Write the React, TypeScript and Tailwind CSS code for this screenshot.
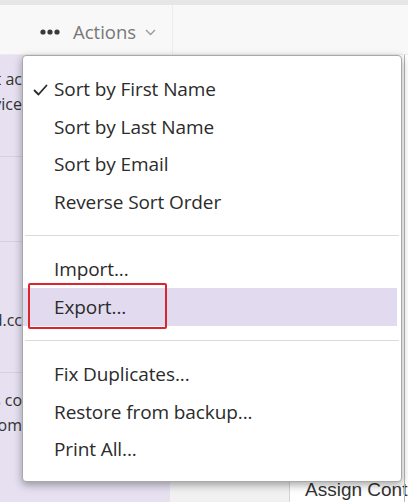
import React from "react";

const font = { fontFamily: '"Open Sans", "Noto Sans", Arial, sans-serif' };

function Peek({ text, className }: { text: string; className?: string }) {
  return (
    <div className={"flex justify-end overflow-hidden whitespace-nowrap w-[22px] " + (className ?? "")}>
      <span className="shrink-0">{text}</span>
    </div>
  );
}

function Item({ label, checked }: { label: string; checked?: boolean }) {
  return (
    <div className="h-[37.5px] flex items-center pl-[10px]">
      <div className="w-[21px] flex items-center">
        {checked && (
          <svg width="15" height="12" viewBox="0 0 15 12" fill="none">
            <path d="M1.5 6.5 L5.5 10.5 L13.5 1.5" stroke="#2a2a2a" strokeWidth="1.8" strokeLinecap="round" strokeLinejoin="round" />
          </svg>
        )}
      </div>
      <span className="text-[19px] text-[#2b2b2b] whitespace-nowrap tracking-[-0.1px]">{label}</span>
    </div>
  );
}

function Sep() {
  return (
    <div className="h-[30px] flex items-center px-[2px]">
      <div className="h-px w-full bg-[#dadada]" />
    </div>
  );
}

export default function App() {
  return (
    <div className="relative w-[408px] h-[502px] overflow-hidden bg-white flex flex-col" style={font}>
      <div className="h-[5px] bg-[#e6e6e6] shrink-0" />
      <div className="h-[50px] shrink-0 bg-[#f8f8f8] flex items-center border-b border-[#ececec]">
        <div className="w-[173px] h-full flex items-center pl-[40px] pt-[4px] border-r border-[#ededed]">
          <svg width="20" height="6" viewBox="0 0 20 6">
            <circle cx="3" cy="3" r="2.6" fill="#3a3a3a" />
            <circle cx="10" cy="3" r="2.6" fill="#3a3a3a" />
            <circle cx="17" cy="3" r="2.6" fill="#3a3a3a" />
          </svg>
          <span className="ml-[13px] text-[18.5px] text-[#777]">Actions</span>
          <svg className="ml-[9px] mt-[2px]" width="11" height="7" viewBox="0 0 11 7" fill="none">
            <path d="M1 1 L5.5 5.5 L10 1" stroke="#999" strokeWidth="1.3" />
          </svg>
        </div>
      </div>
      <div className="flex-1 flex min-w-0">
        <div className="w-[170px] shrink-0 bg-[#e6e0f1] flex flex-col text-[16px] text-[#333] leading-[25px]">
          <div className="h-[12px]" />
          <Peek text="Contact ac" />
          <Peek text="Service" />
          <div className="h-[40px] border-b border-[#d6d0e2]" />
          <div className="h-[85px] border-b border-[#d6d0e2]" />
          <div className="h-[66px]" />
          <Peek text="mail@world.cc" />
          <div className="h-[40px] border-b border-[#d6d0e2]" />
          <div className="h-[15px]" />
          <Peek text="Records co" />
          <Peek text="from" />
        </div>
        <div className="w-[120px] shrink-0 bg-[#f1f1f1] border-r border-[#d4d4d4]" />
        <div className="flex-1 min-w-0 flex flex-col justify-end overflow-hidden">
          <div className="h-[22px] pl-[15px] text-[19px] text-[#333] whitespace-nowrap leading-[20px]" style={{ fontFamily: '"Liberation Sans", Arial, sans-serif' }}>
            Assign Contacts
          </div>
        </div>
      </div>
      <div className="absolute right-[3px] top-[55px] bottom-0 w-px bg-[#b8b8b8]" />

      <div className="absolute left-[22px] top-[55px] w-[380px] h-[427px] bg-white border border-[#a9a9a9] rounded-[4px] shadow-[0_3px_8px_rgba(0,0,0,0.35)] pt-[15px] pb-[13px] flex flex-col">
        <Item label="Sort by First Name" checked />
        <Item label="Sort by Last Name" />
        <Item label="Sort by Email" />
        <Item label="Reverse Sort Order" />
        <Sep />
        <Item label="Import..." />
        <div className="bg-[#e2dbef] mr-[4px]">
          <Item label="Export..." />
        </div>
        <Sep />
        <Item label="Fix Duplicates..." />
        <Item label="Restore from backup..." />
        <Item label="Print All..." />
        <div className="absolute left-[5px] top-[227px] w-[139px] h-[46px] border-2 border-[#d8262c] rounded-[2px]" />
      </div>
    </div>
  );
}
